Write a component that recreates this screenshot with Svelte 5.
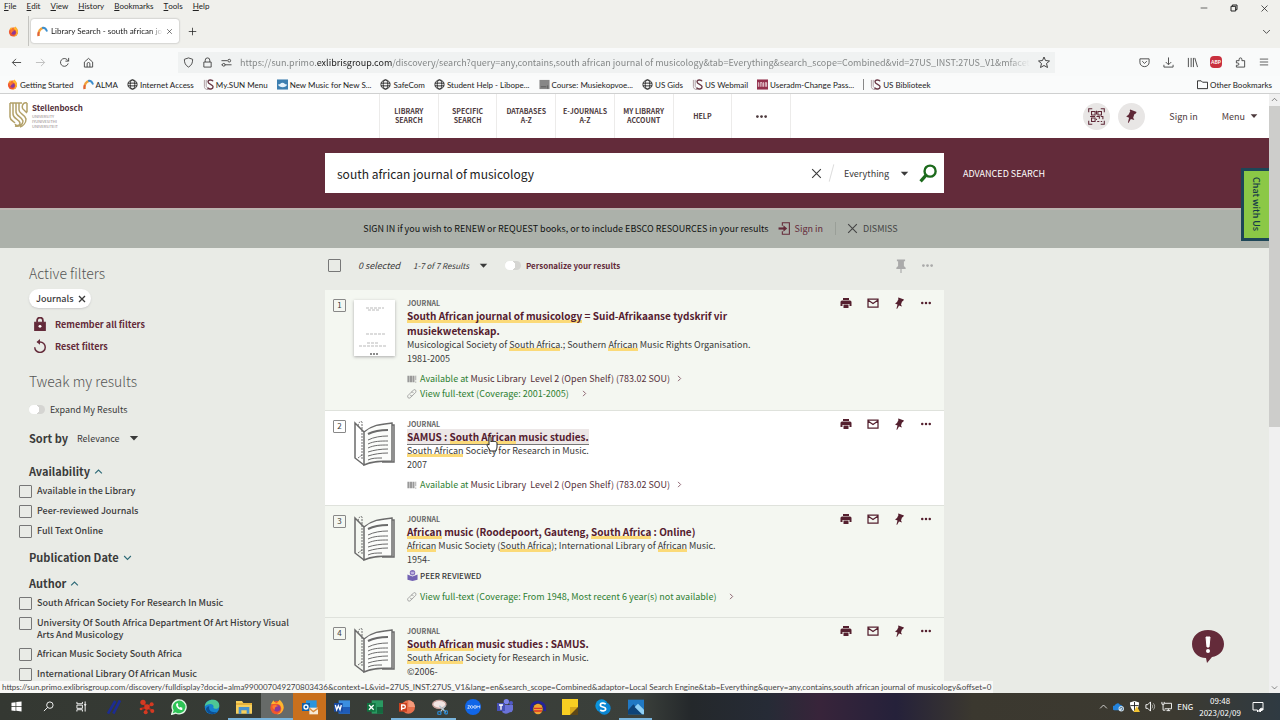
<script lang="ts">
	type Part = { text: string; hit: boolean };

	const menus = ['File', 'Edit', 'View', 'History', 'Bookmarks', 'Tools', 'Help'];

	const bookmarks = [
		{ icon: 'firefox', label: 'Getting Started' },
		{ icon: 'arc', label: 'ALMA' },
		{ icon: 'globe', label: 'Internet Access' },
		{ icon: 'us', label: 'My.SUN Menu' },
		{ icon: 'music', label: 'New Music for New S...' },
		{ icon: 'globe', label: 'SafeCom' },
		{ icon: 'globe', label: 'Student Help - Libope...' },
		{ icon: 'course', label: 'Course: Musiekopvoe...' },
		{ icon: 'globe', label: 'US Gids' },
		{ icon: 'us', label: 'US Webmail' },
		{ icon: 'useradm', label: 'Useradm-Change Pass...' }
	];

	const navLinks = [
		['LIBRARY', 'SEARCH'],
		['SPECIFIC', 'SEARCH'],
		['DATABASES', 'A-Z'],
		['E-JOURNALS', 'A-Z'],
		['MY LIBRARY', 'ACCOUNT'],
		['HELP']
	];

	const availability = ['Available in the Library', 'Peer-reviewed Journals', 'Full Text Online'];
	const authors = [
		'South African Society For Research In Music',
		'University Of South Africa Department Of Art History Visual Arts And Musicology',
		'African Music Society South Africa',
		'International Library Of African Music'
	];

	// Search hits are wrapped in asterisks
	const results = [
		{
			title: '*South African journal of musicology* = Suid-Afrikaanse tydskrif vir musiekwetenskap.',
			author: 'Musicological Society of *South Africa*.; Southern *African* Music Rights Organisation.',
			date: '1981-2005',
			cover: true,
			shelf: 'Music Library  Level 2 (Open Shelf) (783.02 SOU)',
			online: '(Coverage: 2001-2005)'
		},
		{
			title: 'SAMUS : *South African* music studies.',
			author: '*South African* Society for Research in Music.',
			date: '2007',
			shelf: 'Music Library  Level 2 (Open Shelf) (783.02 SOU)',
			hovered: true
		},
		{
			title: '*African* music (Roodepoort, Gauteng, *South Africa* : Online)',
			author: '*African* Music Society (*South Africa*); International Library of *African* Music.',
			date: '1954-',
			peer: true,
			online: '(Coverage: From 1948, Most recent 6 year(s) not available)'
		},
		{
			title: '*South African* music studies : SAMUS.',
			author: '*South African* Society for Research in Music.',
			date: '©2006-'
		}
	];

	const apps = [
		{ name: 'Start', icon: 'windows' },
		{ name: 'Search', icon: 'find' },
		{ name: 'Task View', icon: 'taskview' },
		{ name: 'Slashes', icon: 'slashes' },
		{ name: 'Mendeley', icon: 'cells' },
		{ name: 'WhatsApp', icon: 'whatsapp' },
		{ name: 'Edge', icon: 'edge' },
		{ name: 'Explorer', icon: 'explorer', state: 'open' },
		{ name: 'Firefox', icon: 'firefox', state: 'open active' },
		{ name: 'Outlook', icon: 'outlook', state: 'alert' },
		{ name: 'Word', icon: 'word' },
		{ name: 'Excel', icon: 'excel' },
		{ name: 'PowerPoint', icon: 'powerpoint', state: 'open' },
		{ name: 'Snipping Tool', icon: 'snip', state: 'open' },
		{ name: 'Zoom', icon: 'zoom' },
		{ name: 'Teams', icon: 'teams' },
		{ name: 'Audacity', icon: 'audacity' },
		{ name: 'Sticky Notes', icon: 'notes' },
		{ name: 'Skype', icon: 'skype' },
		{ name: 'Photos', icon: 'photos', state: 'open' }
	];

	let query = $state('south african journal of musicology');

	function split(text: string): Part[] {
		return text
			.split('*')
			.map((part, i) => ({ text: part, hit: i % 2 === 1 }))
			.filter((part) => part.text);
	}
</script>

{#snippet marked(text: string)}
	{#each split(text) as part}{#if part.hit}<mark>{part.text}</mark>{:else}{part.text}{/if}{/each}
{/snippet}

{#snippet icon(name: string, size: number)}
	<svg class="icon" width={size} height={size} viewBox="0 0 24 24" fill="none" stroke="currentColor" stroke-width="2" aria-hidden="true">
		{#if name === 'back'}
			<path d="M22 12H3M11 4l-8 8 8 8" />
		{:else if name === 'forward'}
			<path d="M2 12h19M13 4l8 8-8 8" />
		{:else if name === 'reload'}
			<path d="M20 14a8.500 8.500 0 1 1-2-8l3 3M21 2v7h-7" />
		{:else if name === 'home'}
			<path d="M3 11l9-8 9 8v11H3zM9 22v-7a3 3 0 0 1 6 0v7" />
		{:else if name === 'shield'}
			<path d="M12 2l9 3c0 8-2 13-9 17C5 18 3 13 3 5z" />
		{:else if name === 'padlock'}
			<path d="M4 11h16v11H4zM7 11V7a5 5 0 0 1 10 0v4" />
		{:else if name === 'tune'}
			<path d="M1 8h13M8 17h15M1 17h2" /><circle cx="18" cy="8" r="3" /><circle cx="6" cy="17" r="3" />
		{:else if name === 'star'}
			<path d="M12 2l3 7 8 1-6 5 2 8-7-4-7 4 2-8-6-5 8-1z" />
		{:else if name === 'pocket'}
			<path d="M2 4h20v8a10 9 0 0 1-20 0zM7 9l5 5 5-5" />
		{:else if name === 'download'}
			<path d="M12 1v15M6 11l6 6 6-6M2 17v5h20v-5" />
		{:else if name === 'library'}
			<path d="M3 2v20M9 2v20M14 2v20M17 2l6 20" />
		{:else if name === 'extension'}
			<path d="M3 8h6V5a3 3 0 0 1 6 0v3h6v14H3v-4h3a2 2 0 0 0 0-5H3z" />
		{:else if name === 'menu'}
			<path d="M2 5h20M2 12h20M2 19h20" />
		{:else if name === 'folder'}
			<path d="M1 4h8l3 3h11v14H1z" />
		{:else if name === 'globe'}
			<circle cx="12" cy="12" r="10" /><ellipse cx="12" cy="12" rx="5" ry="10" /><path d="M2 9h20M2 15h20" />
		{:else if name === 'firefox'}
			<circle cx="12" cy="13" r="10" fill="#f0562e" stroke="none" />
			<path d="M3 8c1-2 2-4 4-6 0 3 3 4 5 4l4-5c3 3 6 6 6 12-1 6-5 10-10 10 6-3 8-8 5-13-3-4-8-3-14-2z" fill="#ffb52e" stroke="none" />
			<circle cx="12" cy="14" r="5" fill="#8a3a9c" stroke="none" />
			<path d="M5 10c4-2 7-1 9 1-4 0-6 2-5 5-3-1-4-3-4-6z" fill="#ff7a2e" stroke="none" />
		{:else if name === 'arc'}
			<path d="M4 22C2 12 7 5 14 4" stroke="#f2a23a" stroke-width="5" />
			<path d="M11 4c5-1 9 2 11 8" stroke="#3d8fce" stroke-width="4" />
			<path d="M3 22c-1-4 0-6 1-9" stroke="#e0603f" stroke-width="4" />
		{:else if name === 'us'}
			<path d="M3 2v14c0 5 3 7 8 7M7 2v13c0 3 2 4 4 4" stroke="#a7979b" />
			<path d="M22 5c-2-4-11-4-11 1 0 6 11 5 11 11 0 5-8 7-12 2" stroke="#6b3b48" stroke-width="3" />
		{:else if name === 'music'}
			<path d="M0 1h24v22H0z" fill="#3c7fb0" stroke="none" /><path d="M2 12c5 1 5-4 10-4s5 5 10 4c-2 8-17 8-20 0z" fill="#e4f2fb" stroke="none" />
		{:else if name === 'course'}
			<path d="M1 2h22v20H1z" fill="#878787" stroke="none" /><path d="M4 17h12M19 14v7" stroke="#5b5b5b" />
		{:else if name === 'useradm'}
			<path d="M0 1h24v22H0z" fill="#93304d" stroke="none" /><path d="M3 7v10M7 17V8h4v9M14 7v10M18 17V8h3v9" stroke="#ecd4db" />
		{:else if name === 'close'}
			<path d="M4 4l16 16M20 4L4 20" />
		{:else if name === 'close-bold'}
			<path d="M3 3l18 18M21 3L3 21" stroke-width="4" />
		{:else if name === 'down'}
			<path d="M3 8l9 9 9-9" />
		{:else if name === 'up'}
			<path d="M3 17l9-9 9 9" />
		{:else if name === 'right'}
			<path d="M7 3l9 9-9 9" stroke-width="3" />
		{:else if name === 'plus'}
			<path d="M12 2v20M2 12h20" />
		{:else if name === 'minimise'}
			<path d="M2 12h20" />
		{:else if name === 'restore'}
			<path d="M3 7h14v14H3zM7 7V3h14v14h-4" stroke-width="3" />
		{:else if name === 'caret'}
			<path d="M2 7h20L12 18z" fill="currentColor" stroke="none" />
		{:else if name === 'pin'}
			<path d="M9 1l11 4-2 3-2 1-2 6 2 4-6-2-4 7-1-1 2-8-5-2 4-3 3-6-1-2z" fill="currentColor" stroke="none" />
		{:else if name === 'pin-straight'}
			<path d="M5 1h14v3h-2v8l3 3v2h-7v7h-2v-7H4v-2l3-3V4H5z" fill="currentColor" stroke="none" />
		{:else if name === 'qr'}
			<path d="M1 6V1h5M18 1h5v5M23 18v5h-5M6 23H1v-5" stroke-width="1.500" />
			<path d="M5 5h5v5H5zM14 5h5v5h-5zM5 14h5v5H5zM3 12h7M12 4v5M12 12h4v3M18 12h3v4M13 19h3M18 19h2M12 15v2" stroke-width="1.500" />
		{:else if name === 'find'}
			<circle cx="15" cy="9" r="7" /><path d="M10 14l-8 8" />
		{:else if name === 'search'}
			<circle cx="14" cy="9" r="7" stroke-width="3" /><path d="M9 14l-7 8" stroke-width="4" />
		{:else if name === 'signin'}
			<path d="M8 7V1.500h13v21H8V17" /><path d="M1 12h10" stroke-width="4" /><path d="M10 6l7 6-7 6z" fill="currentColor" stroke="none" />
		{:else if name === 'dots'}
			<g fill="currentColor" stroke="none"><circle cx="3" cy="12" r="3" /><circle cx="12" cy="12" r="3" /><circle cx="21" cy="12" r="3" /></g>
		{:else if name === 'print'}
			<path d="M6 2h12v4H6zM4 7h16a3 3 0 0 1 3 3v8h-4v-4H5v4H1v-8a3 3 0 0 1 3-3zM7 15h10v7H7z" fill="currentColor" stroke="none" />
		{:else if name === 'mail'}
			<path d="M2 4h20v16H2zM2 6l10 7 10-7" stroke-width="2.500" />
		{:else if name === 'lock'}
			<path d="M3 9h18v14H3z" fill="currentColor" /><path d="M7 9V6a5 5 0 0 1 10 0v3" stroke-width="3" /><circle cx="12" cy="16" r="2.500" fill="#fff" stroke="none" />
		{:else if name === 'reset'}
			<path d="M3 14a9 9 0 1 0 9-9H8" stroke-width="2.500" /><path d="M12 0v10L6 5z" fill="currentColor" stroke="none" />
		{:else if name === 'holdings'}
			<path d="M1 4h5v16H1zM7 4h5v16H7zM13 4h5v16h-5z" fill="currentColor" stroke="none" /><path d="M21 4v11M21 18v3" />
		{:else if name === 'link'}
			<path d="M10 8l6-6c4-2 7 2 5 6l-8 8c-3 2-5 0-5-2M14 14l-6 7c-4 3-8-1-6-5l8-8c3-2 5 0 5 2" />
		{:else if name === 'peer'}
			<circle cx="12" cy="6" r="6" fill="#7e6bb8" stroke="none" /><path d="M8 5h8M9 8h6" stroke="#d7cff0" />
			<path d="M1 10l11 4 11-4v11l-11 3-11-3z" fill="#7363b3" stroke="none" />
		{:else if name === 'windows'}
			<path d="M1 4l9-1.500v9H1zM11.500 2.300L23 1v10.500H11.500zM1 13h9v9l-9-1.500zM11.500 13H23v10l-11.500-1.500z" fill="#fff" stroke="none" />
		{:else if name === 'taskview'}
			<path d="M2 2v4h12V2M2 9h12v7H2zM2 23v-4h12v4M20 1v5M20 9v14" /><circle cx="20" cy="8" r="1.500" fill="#fff" />
		{:else if name === 'slashes'}
			<path d="M3 22L14 3M11 22L21 2" stroke="#1c2c92" stroke-width="4" />
		{:else if name === 'cells'}
			<path d="M6 6l6 6 7-4M12 12l-2 8M12 12l8 6M3 15l9-3" stroke="#b3261a" stroke-width="3" />
			<g fill="#d43a22" stroke="none"><circle cx="6" cy="5" r="4" /><circle cx="19" cy="8" r="3" /><circle cx="12" cy="12" r="4" /><circle cx="3" cy="15" r="2" /><circle cx="10" cy="20" r="3" /><circle cx="20" cy="18" r="3" /></g>
		{:else if name === 'whatsapp'}
			<path d="M1 23l2-6a10.500 10.500 0 1 1 4 4z" fill="#2fc457" stroke="#e6f7ea" />
			<path d="M8 7c-2 4 5 11 9 9v-3l-3-1-1 1-3-3 1-1-1-3z" fill="#fff" stroke="none" />
		{:else if name === 'edge'}
			<circle cx="12" cy="12" r="11" fill="#1682cf" stroke="none" />
			<path d="M1 11C3-2 23-2 23 10c0 5-7 6-9 3 2-5-5-8-13-2z" fill="#4ec795" stroke="none" />
			<path d="M8 11c-2 6 4 11 12 8-5 6-15 4-17-3 0-3 2-5 5-5z" fill="#0d4f94" stroke="none" />
		{:else if name === 'explorer'}
			<path d="M0 3h9l2 3h13v16H0z" fill="#f7cf5c" stroke="none" /><path d="M4 12h16v10h-4v-5H8v5H4z" fill="#4a93cf" stroke="none" />
			<path d="M0 6h24v3H0z" fill="#e6b23c" stroke="none" />
		{:else if name === 'outlook'}
			<path d="M6 2h16v15H6z" fill="#2a94dc" stroke="none" /><path d="M0 6h12v12H0z" fill="#0f62ac" stroke="none" />
			<circle cx="6" cy="12" r="3" stroke="#fff" /><path d="M11 13h13v10H11z" fill="#f7e9d6" stroke="none" /><path d="M11 14l6 5 7-5" stroke="#d98a3a" />
		{:else if name === 'word'}
			<path d="M7 2h17v20H7z" fill="#3b8ee0" stroke="none" /><path d="M7 12h17v10H7z" fill="#1e5cb8" stroke="none" /><path d="M0 6h13v13H0z" fill="#1849a0" stroke="none" />
			<path d="M2 9l2 7 2.500-6L9 16l2-7" stroke="#fff" />
		{:else if name === 'excel'}
			<path d="M7 2h17v20H7z" fill="#2a9a62" stroke="none" /><path d="M15 12h9v10h-9z" fill="#15693f" stroke="none" /><path d="M0 6h13v13H0z" fill="#107440" stroke="none" />
			<path d="M3 9l7 7M10 9l-7 7" stroke="#fff" />
		{:else if name === 'powerpoint'}
			<circle cx="14" cy="12" r="10" fill="#e8704c" stroke="none" /><path d="M14 2a10 10 0 0 1 10 10H14z" fill="#f59b7c" stroke="none" /><path d="M0 6h12v13H0z" fill="#c8411f" stroke="none" />
			<path d="M4 17V9h3a2.500 2.500 0 0 1 0 5H4" stroke="#fff" />
		{:else if name === 'snip'}
			<ellipse cx="11" cy="8" rx="10" ry="6" fill="#f3e6e4" stroke="#c8a29c" /><path d="M11 10l10 10M20 10l-8 10" stroke="#b9c8d2" />
			<circle cx="11" cy="21" r="2.500" stroke="#2b80c2" /><circle cx="21" cy="20" r="2.500" stroke="#2b80c2" />
		{:else if name === 'zoom'}
			<circle cx="12" cy="12" r="12" fill="#1166e8" stroke="none" /><path d="M4 10h3l-3 4h3M18 14v-4l2 2 2-2v4" stroke="#fff" stroke-width="1" /><circle cx="10" cy="12" r="2" stroke="#fff" stroke-width="1" /><circle cx="15" cy="12" r="2" stroke="#fff" stroke-width="1" />
		{:else if name === 'teams'}
			<circle cx="14" cy="4" r="4" fill="#7b83eb" stroke="none" /><circle cx="21" cy="6" r="3" fill="#5059c9" stroke="none" />
			<path d="M8 9h16v7a5 5 0 0 1-5 4 8 8 0 0 1-11 0z" fill="#6a72d8" stroke="none" /><path d="M0 6h12v12H0z" fill="#4650b4" stroke="none" /><path d="M3 9h6M6 9v7" stroke="#fff" />
		{:else if name === 'audacity'}
			<path d="M2 18C-1 0 25 0 22 18" stroke="#23229a" stroke-width="4" /><ellipse cx="12" cy="15" rx="7" ry="8" fill="#f0a332" stroke="none" /><path d="M6 14h12M6 18h12" stroke="#d8342a" />
		{:else if name === 'notes'}
			<path d="M0 0h24v13L13 24H0z" fill="#f8cf22" stroke="none" /><path d="M24 12v12H12V12z" fill="#5d4718" stroke="none" /><path d="M24 12L12 24V12z" fill="#d8a91c" stroke="none" />
		{:else if name === 'skype'}
			<circle cx="10" cy="10" r="9.500" fill="#0a94dc" stroke="none" /><circle cx="14" cy="14" r="9.500" fill="#0a86d2" stroke="none" />
			<path d="M16 8c-2-3-8-2-8 1 0 4 8 2 8 6 0 3-6 4-8 1" stroke="#fff" stroke-width="2.500" />
		{:else if name === 'photos'}
			<path d="M0 1h24v22H0z" fill="#2079c4" stroke="none" /><path d="M0 17l8-9 15 15H0z" fill="#0d4378" stroke="none" /><path d="M10 12l5-5 9 9v7h-3z" fill="#8fd0f5" stroke="none" />
		{:else if name === 'cloud'}
			<path d="M3 20a5 5 0 0 1 1-10 6 6 0 0 1 11-2 6 6 0 0 1 6 6v6z" fill="#2383dc" stroke="none" /><circle cx="18" cy="17" r="6" fill="#cfdde8" stroke="none" /><path d="M15 17a3 3 0 1 1 3 3" stroke="#3b6b91" />
		{:else if name === 'defender'}
			<path d="M12 0l10 3c0 9-3 16-10 21C5 19 2 12 2 3z" fill="#fff" stroke="none" /><path d="M12 2v20M3 10h18" stroke="#222" /><path d="M17 11l7 13H10z" fill="#f3c431" stroke="none" />
		{:else if name === 'sound'}
			<path d="M2 8h4l6-6v20l-6-6H2z" /><path d="M15 8c2 2 2 6 0 8M18 5c4 4 4 10 0 14" stroke-opacity="0.6" />
		{:else if name === 'network'}
			<path d="M8 5h15v12H8M12 21h8M16 17v4M2 2v5h5V2M4.500 7v13h5" />
		{:else if name === 'message'}
			<path d="M2 3h20v15h-7l-4 4v-4H2z" /><path d="M16 22a4 4 0 0 1 6-6z" fill="#fff" />
		{/if}
	</svg>
{/snippet}

{#snippet book()}
	<svg class="book" viewBox="0 1 41 45" fill="none" stroke="#6b6b6b" stroke-width="1.500" aria-hidden="true">
		<path d="M10 12C19 4 30 4 38 3v38c-10 0-20 0-28 4z" fill="#fbfcfa" />
		<path d="M10 45L1 38V3l9 9M38 5l2 0v37l-12 0" />
		<path d="M4 6c0-3 3-6 4-4v37M4 38l4-3" stroke-width="1" stroke-dasharray="2 1" />
		<path d="M14 14c6-3 13-4 20-4" stroke-width="2" />
		<path d="M14 20c6-3 13-4 20-4M14 24c6-3 13-3 20-3M14 28c6-3 13-3 20-3M14 32c6-2 13-3 20-3M14 36c6-2 13-3 20-3M14 40c4-2 8-2 14-2" stroke-width="1" />
	</svg>
{/snippet}

<div class="desktop">
	<div class="chrome">
		<div class="menubar">
			{#each menus as menu}
				<button><u>{menu[0]}</u>{menu.slice(1)}</button>
			{/each}
			<div class="window-buttons">
				<button aria-label="Minimise">{@render icon('minimise', 8)}</button>
				<button aria-label="Restore">{@render icon('restore', 8)}</button>
				<button aria-label="Close window">{@render icon('close', 9)}</button>
			</div>
		</div>
		<div class="tabs">
			<span class="pinned">{@render icon('firefox', 11)}</span>
			<div class="tab">
				{@render icon('arc', 11)}
				<span class="tab-title">Library Search - south african jo</span>
				<button aria-label="Close tab">{@render icon('close', 7)}</button>
			</div>
			<button class="new-tab" aria-label="New tab">{@render icon('plus', 9)}</button>
			<button class="all-tabs" aria-label="List all tabs">{@render icon('down', 9)}</button>
		</div>
		<div class="navbar">
			<div class="tools">
				<button aria-label="Back">{@render icon('back', 11)}</button>
				<button aria-label="Forward" disabled>{@render icon('forward', 11)}</button>
				<button aria-label="Reload">{@render icon('reload', 11)}</button>
				<button aria-label="Home">{@render icon('home', 11)}</button>
			</div>
			<div class="address">
				{@render icon('shield', 11)}
				{@render icon('padlock', 11)}
				{@render icon('tune', 11)}
				<span class="url">https://sun.primo.<b>exlibrisgroup.com</b>/discovery/search?query=any,contains,south african journal of musicology&amp;tab=Everything&amp;search_scope=Combined&amp;vid=27US_INST:27US_V1&amp;mfacet=rtyp</span>
				{@render icon('star', 12)}
			</div>
			<div class="tools">
				<button aria-label="Pocket">{@render icon('pocket', 11)}</button>
				<button aria-label="Downloads">{@render icon('download', 11)}</button>
				<button aria-label="Library">{@render icon('library', 11)}</button>
				<button class="abp">ABP</button>
				<button aria-label="Extensions">{@render icon('extension', 11)}</button>
				<button aria-label="Application menu">{@render icon('menu', 10)}</button>
			</div>
		</div>
		<div class="bookmarks">
			{#each bookmarks as bookmark}
				<a href="#bookmark">{@render icon(bookmark.icon, 11)}{bookmark.label}</a>
			{/each}
			<a href="#bookmark" class="after-line">{@render icon('us', 11)}US Biblioteek</a>
			<a href="#bookmark" class="other">{@render icon('folder', 11)}Other Bookmarks</a>
		</div>
	</div>

	<div class="viewport">
		<div class="page">
			<header>
				<a href="#home" class="brand" aria-label="Stellenbosch University">
					<svg width="20" height="26" viewBox="0 0 20 26" fill="none" stroke="#b3a169" stroke-width="1.500" aria-hidden="true">
						<path d="M1 1h12M1 1v14c0 3 3 4 5 6M4 1v11c0 5 6 5 7 9 0 3-4 3-5 1M7 1v9c0 4 6 5 7 9 0 4-4 6-8 5M10 1v7c0 4 6 4 7 9 0 4-3 7-6 8" />
						<path d="M18 1v9M18 1c-5-1-6 5-3 7l3 3" />
					</svg>
					<span><strong>Stellenbosch</strong><small>UNIVERSITY<br />IYUNIVESITHI<br />UNIVERSITEIT</small></span>
				</a>
				<nav>
					{#each navLinks as lines}
						<a href="#nav">{#each lines as line}<span>{line}</span>{/each}</a>
					{/each}
					<a href="#more" aria-label="More">{@render icon('dots', 11)}</a>
				</nav>
				<div class="account">
					<button class="round" aria-label="Scan QR code">{@render icon('qr', 17)}</button>
					<button class="round" aria-label="My favorites">{@render icon('pin', 14)}</button>
					<a href="#signin">Sign in</a>
					<button class="menu">Menu {@render icon('caret', 8)}</button>
				</div>
			</header>

			<div class="search-band">
				<form class="search">
					<input type="text" aria-label="Search" bind:value={query} />
					<button type="button" class="clear" aria-label="Clear">{@render icon('close', 13)}</button>
					<i class="slash"></i>
					<span class="scope">
						<select aria-label="Search scope"><option>Everything</option></select>
						{@render icon('caret', 9)}
					</span>
					<button type="button" class="go" aria-label="Submit search">{@render icon('search', 19)}</button>
				</form>
				<a href="#advanced">ADVANCED SEARCH</a>
			</div>

			<div class="notice">
				<span>SIGN IN if you wish to RENEW or REQUEST books, or to include EBSCO RESOURCES in your results</span>
				<a href="#signin">{@render icon('signin', 13)}Sign in</a>
				<button>{@render icon('close', 13)}DISMISS</button>
			</div>

			<div class="columns">
				<aside>
					<h2>Active filters</h2>
					<button class="chip">Journals {@render icon('close-bold', 8)}</button>
					<button class="filter-action">{@render icon('lock', 14)}Remember all filters</button>
					<button class="filter-action">{@render icon('reset', 14)}Reset filters</button>

					<h2 class="tweak">Tweak my results</h2>
					<label class="expand"><input type="checkbox" class="switch" />Expand My Results</label>
					<div class="sort">
						<label for="sort">Sort by</label>
						<select id="sort"><option>Relevance</option></select>
						{@render icon('caret', 10)}
					</div>

					<h3>Availability {@render icon('up', 9)}</h3>
					{#each availability as item}
						<label class="facet"><input type="checkbox" /><span>{item}</span></label>
					{/each}
					<h3 class="spaced">Publication Date {@render icon('down', 9)}</h3>
					<h3 class="spaced">Author {@render icon('up', 9)}</h3>
					{#each authors as item}
						<label class="facet"><input type="checkbox" /><span>{item}</span></label>
					{/each}
				</aside>

				<main>
					<div class="toolbar">
						<input type="checkbox" aria-label="Select all results" />
						<em class="selected">0 selected</em>
						<button class="range"><em>1-7 of 7 Results</em>{@render icon('caret', 9)}</button>
						<label class="personalize"><input type="checkbox" class="switch" />Personalize your results</label>
						<span class="toolbar-icons">
							<button aria-label="Pin">{@render icon('pin-straight', 14)}</button>
							<button aria-label="More actions">{@render icon('dots', 11)}</button>
						</span>
					</div>

					{#each results as result, i}
						<article class:hovered={result.hovered}>
							<span class="number">{i + 1}</span>
							<div class="thumb">
								{#if result.cover}
									<svg class="cover" viewBox="0 0 41 56" stroke="#8c8c8c" aria-hidden="true">
										<path d="M12 8h18M14 10h11M12 34h19M13 43h12M5 46h27" stroke-dasharray="3 1" stroke-width="0.600" fill="none" />
										<path d="M16 54h9" stroke-dasharray="2 1" stroke-width="2" />
									</svg>
								{:else}
									{@render book()}
								{/if}
							</div>
							<div class="record">
								<p class="type">JOURNAL</p>
								<h4>
									<a href="#record">{@render marked(result.title)}</a>
									{#if result.hovered}
										<svg class="hand" width="12" height="16" viewBox="0 0 12 16" aria-hidden="true">
											<path d="M3 9V2c0-2 2-2 2 0v4c0-1 2-1 2 0 0-1 2-1 2 0 0-1 2 0 2 1v4c0 2-1 2-1 4H4c0-2-3-4-3-6 0-1 1-1 2 0z" fill="#fff" stroke="#222" />
										</svg>
									{/if}
								</h4>
								<p>{@render marked(result.author)}</p>
								<p>{result.date}</p>
								{#if result.peer}
									<p class="peer">{@render icon('peer', 11)}PEER REVIEWED</p>
								{/if}
								<ul>
									{#if result.shelf}
										<li><a href="#shelf">{@render icon('holdings', 10)}<span>Available at <b>{result.shelf}</b></span>{@render icon('right', 7)}</a></li>
									{/if}
									{#if result.online}
										<li><a href="#online" class="online">{@render icon('link', 10)}<span>View full-text {result.online}</span>{@render icon('right', 7)}</a></li>
									{/if}
								</ul>
							</div>
							<div class="actions">
								<button aria-label="Print">{@render icon('print', 12)}</button>
								<button aria-label="Email">{@render icon('mail', 12)}</button>
								<button aria-label="Pin">{@render icon('pin', 12)}</button>
								<button aria-label="More">{@render icon('dots', 10)}</button>
							</div>
						</article>
					{/each}
				</main>
			</div>

			<button class="chat">Chat with Us</button>
			<button class="feedback" aria-label="Report a problem">
				<svg width="32" height="34" viewBox="0 0 32 34" aria-hidden="true">
					<path d="M16 0C7 0 0 6 0 14s6 14 14 14l1 5 5-6c7-1 12-6 12-13C32 6 25 0 16 0z" fill="#642b3a" />
					<path d="M14 7h4l-1 10h-2z" fill="#fff" stroke="#fff" /><circle cx="16" cy="21" r="2" fill="#fff" />
				</svg>
			</button>
		</div>

		<div class="scrollbar">
			{@render icon('up', 7)}
			<div class="thumb-bar"></div>
			{@render icon('down', 7)}
		</div>
		<div class="status">https://sun.primo.exlibrisgroup.com/discovery/fulldisplay?docid=alma990007049270803436&amp;context=L&amp;vid=27US_INST:27US_V1&amp;lang=en&amp;search_scope=Combined&amp;adaptor=Local Search Engine&amp;tab=Everything&amp;query=any,contains,south african journal of musicology&amp;offset=0</div>
	</div>

	<div class="taskbar">
		<div class="apps">
			{#each apps as app}
				<button class={app.state} aria-label={app.name}>{@render icon(app.icon, app.icon === 'find' || app.icon === 'taskview' || app.icon === 'windows' ? 11 : 16)}</button>
			{/each}
		</div>
		<div class="tray">
			{@render icon('up', 9)}
			{@render icon('cloud', 11)}
			{@render icon('defender', 11)}
			{@render icon('sound', 11)}
			{@render icon('network', 11)}
			<span>ENG</span>
			<time>09:48<br />2023/02/09</time>
			{@render icon('message', 12)}
		</div>
	</div>
</div>

<style>
	:global(body) {
		margin: 0;
	}

	.desktop {
		display: flex;
		flex-direction: column;
		height: 100vh;
		overflow: hidden;
		font-family: 'Noto Sans CJK SC', 'Open Sans', sans-serif;
		font-size: 9px;
		color: #3a3a3a;
	}

	button,
	input,
	select {
		font: inherit;
		color: inherit;
		background: none;
		border: 0;
		padding: 0;
		margin: 0;
		appearance: none;
	}

	button {
		display: inline-flex;
		align-items: center;
		justify-content: center;
	}

	a {
		color: inherit;
		text-decoration: none;
	}

	p,
	h2,
	h3,
	h4,
	ul {
		margin: 0;
		padding: 0;
		list-style: none;
	}

	.icon {
		flex: none;
	}

	/* Browser chrome */
	.chrome {
		flex: none;
		font-family: Lato, 'Open Sans', sans-serif;
		font-size: 8px;
		color: #222;
		background: #f0f0ec;
	}

	.menubar {
		display: flex;
		gap: 10px;
		height: 12px;
		padding: 0 0 2px 4px;
	}

	.window-buttons {
		display: flex;
		gap: 22px;
		margin: 4px 11px 0 auto;
	}

	.tabs {
		display: flex;
		align-items: center;
		height: 34px;
	}

	.pinned {
		display: flex;
		align-items: center;
		height: 30px;
		padding: 0 9px 0 8px;
		border-right: 1px solid #c4c4c0;
	}

	.tab {
		display: flex;
		align-items: center;
		gap: 3px;
		width: 136px;
		height: 24px;
		margin-left: 2px;
		padding: 0 6px;
		background: #fff;
		border-radius: 3px;
		box-shadow: 0 0 2px #999;
	}

	.tab-title {
		flex: 1;
		overflow: hidden;
		white-space: nowrap;
		mask-image: linear-gradient(90deg, #000 88%, transparent);
	}

	.new-tab {
		margin-left: 9px;
	}

	.all-tabs {
		margin: 0 9px 0 auto;
	}

	.navbar {
		display: flex;
		align-items: center;
		height: 28px;
		background: #f9fafa;
		color: #444;
	}

	.tools {
		display: flex;
		padding: 0 4px;
	}

	.tools button {
		width: 24px;
	}

	.tools button:disabled {
		color: #bbb;
	}

	.tools .abp {
		width: 12px;
		height: 12px;
		margin: 0 6px;
		border-radius: 4px;
		background: #c9303e;
		color: #fff;
		font-size: 5px;
		font-weight: 700;
	}

	.address {
		display: flex;
		flex: 1;
		align-items: center;
		gap: 8px;
		min-width: 0;
		height: 21px;
		margin: 0 73px 0 74px;
		padding: 0 5px;
		background: #f0f2f2;
	}

	.url {
		flex: 1;
		overflow: hidden;
		white-space: nowrap;
		font-family: 'Noto Sans CJK SC', 'Open Sans', sans-serif;
		font-size: 9px;
		color: #858888;
		mask-image: linear-gradient(90deg, #000 97%, transparent);
	}

	.url b {
		font-weight: 400;
		color: #222;
	}

	.bookmarks {
		display: flex;
		align-items: center;
		gap: 9px;
		height: 17px;
		padding: 0 8px 0 7px;
		background: #fafbfb;
		border-bottom: 1px solid #cfd0d0;
		white-space: nowrap;
	}

	.bookmarks a {
		display: flex;
		align-items: center;
		gap: 2px;
	}

	.bookmarks .after-line {
		padding-left: 6px;
		border-left: 1px solid #888;
	}

	.bookmarks .other {
		margin-left: auto;
	}

	/* Page */
	.viewport {
		position: relative;
		display: flex;
		flex: 1;
		min-height: 0;
	}

	.page {
		position: relative;
		flex: 1;
		min-width: 0;
		overflow: hidden;
		background: #e9ebe6;
	}

	header {
		display: grid;
		grid-template-columns: 379fr 412px 478fr;
		height: 44px;
		background: #fff;
	}

	.brand {
		display: flex;
		gap: 3px;
		padding: 8px 0 0 9px;
	}

	.brand strong {
		display: block;
		font-size: 8px;
		line-height: 12px;
		font-weight: 700;
		color: #54303a;
	}

	.brand small {
		display: block;
		font-size: 4px;
		line-height: 5px;
		color: #8d8284;
	}

	nav {
		display: grid;
		grid-template-columns: repeat(7, 1fr);
		border-left: 1px solid #ecebea;
	}

	nav a {
		display: flex;
		flex-direction: column;
		align-items: center;
		justify-content: center;
		border-right: 1px solid #ecebea;
		font-size: 7px;
		line-height: 9px;
		font-weight: 700;
		color: #4d3a3d;
	}

	.account {
		display: flex;
		align-items: center;
		justify-content: flex-end;
		gap: 8px;
		padding-right: 11px;
		color: #4d3a3d;
	}

	.round {
		width: 27px;
		height: 27px;
		border-radius: 50%;
		background: #e8e6e5;
		color: #5e2837;
	}

	.account a {
		margin: 0 16px;
	}

	.menu {
		gap: 5px;
	}

	.search-band {
		display: grid;
		grid-template-columns: 325fr 619fr 325fr;
		align-items: center;
		height: 70px;
		background: #632b3a;
		color: #fff;
	}

	.search-band > a {
		margin-left: 19px;
	}

	.search {
		display: flex;
		grid-column: 2;
		align-items: center;
		height: 40px;
		background: #fff;
		color: #3a3a3a;
	}

	.search input {
		flex: 1;
		min-width: 0;
		padding: 0 12px;
		font-size: 12px;
		color: #222;
	}

	.slash {
		width: 1px;
		height: 18px;
		margin: 0 12px 0 8px;
		background: #ddd;
		transform: rotate(15deg);
	}

	.scope {
		display: flex;
		align-items: center;
		gap: 10px;
	}

	.go {
		margin: 0 6px 0 10px;
		color: #1c6a1c;
	}

	.notice {
		display: flex;
		align-items: center;
		justify-content: center;
		height: 36px;
		padding: 0 8px 2px 0;
		border-top: 2px solid #bcb4b0;
		background: #acb1aa;
		color: #111;
	}

	.notice a {
		display: flex;
		align-items: center;
		gap: 4px;
		margin-left: 9px;
		padding-right: 12px;
		border-right: 1px solid #9a9f98;
		color: #642b3a;
	}

	.notice button {
		gap: 4px;
		margin-left: 10px;
		color: #444;
	}

	.columns {
		display: grid;
		grid-template-columns: 325fr 619fr 325fr;
	}

	/* Filters */
	aside {
		display: flex;
		flex-direction: column;
		align-items: flex-start;
		padding: 15px 30px 0 19px;
	}

	h2 {
		margin-left: 10px;
		font-size: 14px;
		line-height: 20px;
		font-weight: 300;
		color: #555;
	}

	.chip {
		gap: 4px;
		height: 19px;
		margin: 6px 0 5px 10px;
		padding: 0 5px 0 7px;
		border-radius: 10px;
		background: #fff;
		box-shadow: 0 1px 2px #ccc;
		font-weight: 500;
	}

	.filter-action {
		gap: 8px;
		height: 22px;
		margin-left: 14px;
		font-weight: 700;
		color: #642b3a;
	}

	.tweak {
		margin-top: 14px;
	}

	.switch {
		width: 16px;
		height: 9px;
		border-radius: 5px;
		background: radial-gradient(circle at 5px 50%, #fff 5px, #d5d5d2 5px);
	}

	.expand {
		display: flex;
		align-items: center;
		gap: 5px;
		height: 20px;
		margin: 8px 0 9px 10px;
	}

	.sort {
		display: flex;
		align-items: center;
		gap: 9px;
		height: 20px;
		margin: 0 0 13px 10px;
	}

	.sort label {
		font-size: 11px;
		font-weight: 700;
	}

	h3 {
		display: flex;
		align-items: center;
		gap: 4px;
		height: 20px;
		margin-left: 10px;
		font-size: 11px;
		font-weight: 700;
	}

	h3 .icon {
		color: #2d6a77;
		stroke-width: 3px;
	}

	.spaced {
		margin-top: 6px;
	}

	.facet {
		display: flex;
		gap: 5px;
		padding: 4px 0 3px;
		line-height: 12px;
		font-weight: 500;
	}

	.facet input,
	.toolbar > input {
		flex: none;
		width: 13px;
		height: 13px;
		border: 1px solid #777;
		border-radius: 1px;
	}

	/* Results */
	.toolbar {
		display: flex;
		align-items: center;
		height: 35px;
		padding: 0 11px 7px 3px;
	}

	.selected {
		margin: 0 13px 0 17px;
	}

	.range {
		gap: 10px;
		margin-right: 17px;
		font-size: 8px;
	}

	.personalize {
		display: flex;
		align-items: center;
		gap: 5px;
		font-size: 8px;
		font-weight: 700;
		color: #642b3a;
	}

	.toolbar-icons {
		display: flex;
		gap: 14px;
		margin-left: auto;
		color: #aaa;
	}

	article {
		display: flex;
		padding: 7px 13px 9px 8px;
		border-bottom: 1px solid #dfe2dc;
		background: #f4f7f1;
	}

	article.hovered {
		background: #fff;
	}

	.number {
		width: 11px;
		height: 11px;
		margin-top: 2px;
		border: 1px solid #888;
		border-radius: 1px;
		font-size: 8px;
		line-height: 10px;
		text-align: center;
	}

	.thumb {
		width: 41px;
		margin: 3px 12px 0 8px;
	}

	.cover {
		display: block;
		width: 41px;
		height: 56px;
		background: #fff;
		box-shadow: 0 1px 3px #aaa;
	}

	.book {
		display: block;
		width: 41px;
		height: 45px;
	}

	.record {
		position: relative;
		flex: 1;
		line-height: 14px;
	}

	.record .type {
		height: 11px;
		font-size: 7px;
		line-height: 12px;
		font-weight: 700;
		color: #666;
	}

	h4 {
		position: relative;
		max-width: 340px;
		font-size: 10px;
		line-height: 15px;
		font-weight: 700;
		color: #54202f;
	}

	mark {
		background: none;
		color: inherit;
		box-shadow: inset 0 -3px #fbda78;
	}

	.hovered h4 a {
		background: #ece7e7;
		border-bottom: 1px solid #777;
	}

	.hand {
		position: absolute;
		left: 79px;
		top: 7px;
	}

	.record .peer {
		display: flex;
		align-items: center;
		gap: 2px;
		height: 17px;
		font-size: 8px;
		font-weight: 500;
	}

	.record ul {
		margin-top: 5px;
	}

	.record li:only-child {
		margin-bottom: 4px;
	}

	.record li a {
		display: flex;
		align-items: center;
		gap: 3px;
		height: 15px;
		color: #2f8033;
		white-space: pre;
	}

	.record li b {
		font-weight: 400;
		color: #54303a;
	}

	.record li .icon {
		color: #999;
	}

	.record li .icon:last-child {
		margin-left: 3px;
		color: #805060;
	}

	.record li .online .icon:last-child {
		margin-left: 9px;
	}

	.actions {
		display: flex;
		align-items: center;
		gap: 15px;
		height: 12px;
		color: #54202f;
	}

	/* Floating widgets */
	.chat {
		position: absolute;
		top: 74px;
		right: 0;
		width: 28px;
		height: 73px;
		border: 3px solid #1d4657;
		border-right: 0;
		background: #8bc846;
		color: #173a48;
		writing-mode: vertical-rl;
		font-weight: 500;
	}

	.feedback {
		position: absolute;
		right: 45px;
		bottom: 29px;
	}

	.scrollbar {
		display: flex;
		flex-direction: column;
		align-items: center;
		width: 11px;
		padding: 2px 0;
		background: #f0f0f0;
	}

	.thumb-bar {
		width: 100%;
		height: 54%;
		margin: 3px 0 auto;
		background: #cdcdcb;
	}

	.status {
		position: absolute;
		left: 0;
		bottom: 0;
		padding: 0 2px;
		background: #f8f8f6;
		font-family: Lato, 'Open Sans', sans-serif;
		font-size: 8px;
		line-height: 12px;
		color: #444;
		white-space: nowrap;
	}

	/* Taskbar */
	.taskbar {
		display: flex;
		flex: none;
		justify-content: space-between;
		height: 27px;
		background: linear-gradient(90deg, #343832 0%, #3b403b 50%, #24282b 54%, #262b36 60%, #38243a 64%, #25213a 70%, #3b382f 76%, #3c3a31 92%, #2f3a42 100%);
		color: #fff;
	}

	.apps {
		display: grid;
		grid-template-columns: repeat(20, 1fr);
		width: 652px;
	}

	.apps .open {
		box-shadow: inset 0 -2px #79b4dc;
	}

	.apps .active {
		background: #666a68;
	}

	.apps .alert {
		background: #c9701d;
	}

	.tray {
		display: flex;
		align-items: center;
		gap: 5px;
		padding-right: 16px;
		font-size: 8px;
	}

	.tray time {
		margin: 0 6px 0 1px;
		line-height: 12px;
		text-align: center;
	}
</style>
